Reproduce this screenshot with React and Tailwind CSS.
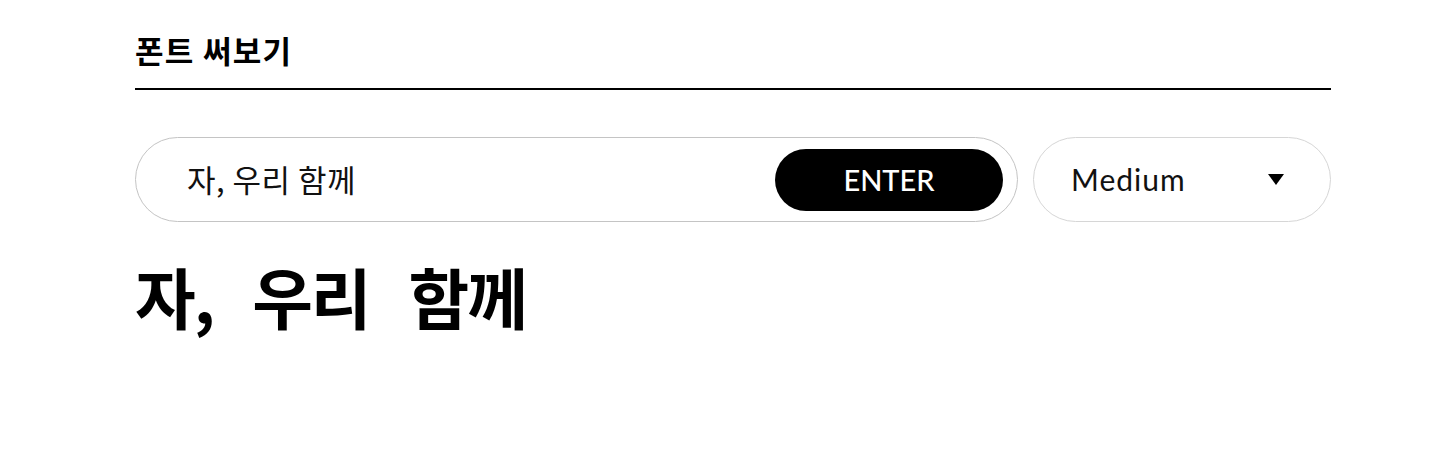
import React, { useState } from 'react';

const App = () => {
    const [text, setText] = useState('자, 우리 함께');
    const [preview, setPreview] = useState('자, 우리 함께');
    const [weight] = useState('Medium');

    return (
        <div className="w-full h-[450px] bg-white font-['Lato','Noto_Sans_CJK_KR',sans-serif] text-black">
            <div className="ml-[135px] w-[1196px] pt-[32px]">
                <div className="border-b-2 border-black pb-[20px]">
                    <h2 className="text-[31px] leading-[36px] font-bold font-['Noto_Sans_CJK_KR',sans-serif] tracking-[1.3px]">폰트 써보기</h2>
                </div>

                <div className="mt-[47px] flex gap-[15px]">
                    <div className="flex-1 h-[85px] rounded-full border border-[#c4c4c4] flex items-center pl-[51px] pr-[14px]">
                        <input
                            value={text}
                            onChange={e => setText(e.target.value)}
                            className="flex-1 outline-none bg-transparent text-[31px] tracking-[0.5px] font-['Noto_Sans_CJK_KR',sans-serif] text-[#111]"
                        />
                        <button
                            onClick={() => setPreview(text)}
                            className="w-[228px] h-[62px] rounded-full bg-black text-white text-[29px] font-medium flex items-center justify-center"
                        >
                            ENTER
                        </button>
                    </div>
                    <div className="w-[298px] h-[85px] rounded-full border border-[#d6d6d6] flex items-center justify-between pl-[37px] pr-[46px]">
                        <span className="text-[30px] tracking-[1px] text-[#111]">{weight}</span>
                        <svg width="16" height="11" viewBox="0 0 16 11">
                            <path d="M0 0 L16 0 L8 11 Z" fill="#000" />
                        </svg>
                    </div>
                </div>

                <div className="mt-[28px] text-[66px] leading-[90px] font-bold font-['Noto_Sans_CJK_KR',sans-serif] tracking-[-2px] [word-spacing:26px]">
                    {preview}
                </div>
            </div>
        </div>
    );
};

export default App;
